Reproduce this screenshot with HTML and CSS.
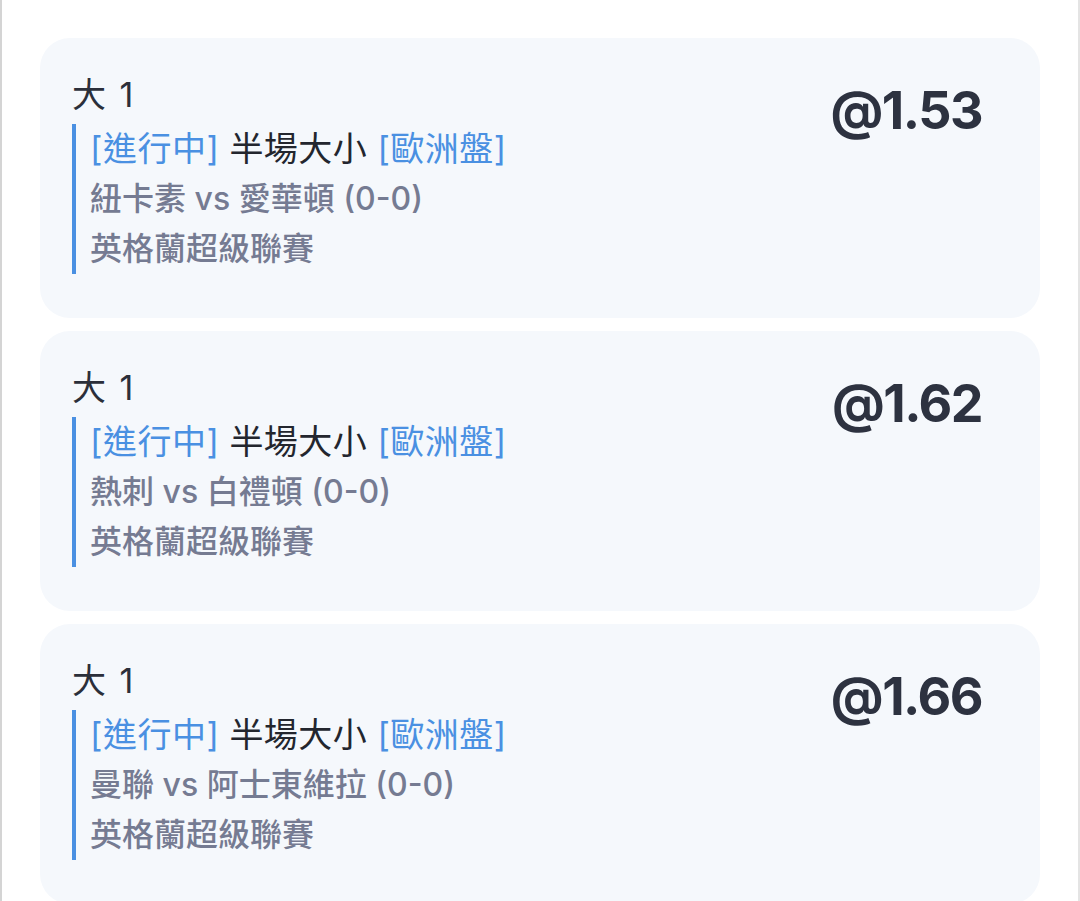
FILE: index.html
```html
<!DOCTYPE html>
<html lang="zh-Hant">
<head>
    <meta charset="UTF-8">
    <meta name="viewport" content="width=device-width, initial-scale=1.0">
    <title>注單</title>
    <link rel="stylesheet" href="styles.css">
</head>
<body>
    <div class="page">
        <div class="bet-card">
            <div class="bet-info">
                <div class="bet-pick">大 1</div>
                <div class="bet-detail">
                    <div class="bet-market"><span class="tag">[進行中]</span> 半場大小 <span class="tag">[歐洲盤]</span></div>
                    <div class="bet-sub">紐卡素 vs 愛華頓 (0-0)</div>
                    <div class="bet-sub">英格蘭超級聯賽</div>
                </div>
            </div>
            <div class="bet-odds">@1.53</div>
        </div>

        <div class="bet-card">
            <div class="bet-info">
                <div class="bet-pick">大 1</div>
                <div class="bet-detail">
                    <div class="bet-market"><span class="tag">[進行中]</span> 半場大小 <span class="tag">[歐洲盤]</span></div>
                    <div class="bet-sub">熱刺 vs 白禮頓 (0-0)</div>
                    <div class="bet-sub">英格蘭超級聯賽</div>
                </div>
            </div>
            <div class="bet-odds">@1.62</div>
        </div>

        <div class="bet-card">
            <div class="bet-info">
                <div class="bet-pick">大 1</div>
                <div class="bet-detail">
                    <div class="bet-market"><span class="tag">[進行中]</span> 半場大小 <span class="tag">[歐洲盤]</span></div>
                    <div class="bet-sub">曼聯 vs 阿士東維拉 (0-0)</div>
                    <div class="bet-sub">英格蘭超級聯賽</div>
                </div>
            </div>
            <div class="bet-odds">@1.66</div>
        </div>
    </div>
</body>
</html>
```

FILE: styles.css
```css
body {
    margin: 0;
    background-color: #ffffff;
    font-family: Inter, "Noto Sans CJK TC", sans-serif;
    color: #2b2f3a;
}
.page {
    display: flex;
    flex-direction: column;
    gap: 13px;
    padding: 38px 38px 0 38px;
    border-left: 2px solid #d4d4d4;
    border-right: 2px solid #e4e4e4;
    min-height: 901px;
    box-sizing: border-box;
}
.bet-card {
    display: flex;
    justify-content: space-between;
    align-items: flex-start;
    height: 280px;
    box-sizing: border-box;
    padding: 32px 58px 0 32px;
    background-color: #f5f8fc;
    border-radius: 30px;
    flex-shrink: 0;
}
.bet-pick {
    font-size: 34px;
    line-height: 50px;
    word-spacing: 4px;
    color: #2b2f3a;
}
.bet-detail {
    margin-top: 4px;
    border-left: 4px solid #4a90e2;
    padding-left: 14px;
}
.bet-market {
    font-size: 34px;
    line-height: 50px;
    letter-spacing: 0.5px;
    color: #23262e;
}
.tag {
    color: #4a90e2;
}
.bet-sub {
    font-size: 32px;
    line-height: 50px;
    font-weight: 500;
    color: #757b92;
}
.bet-odds {
    margin-top: 11px;
    font-size: 52px;
    line-height: 60px;
    font-weight: 700;
    letter-spacing: -1.5px;
    color: #2d3240;
}
```
